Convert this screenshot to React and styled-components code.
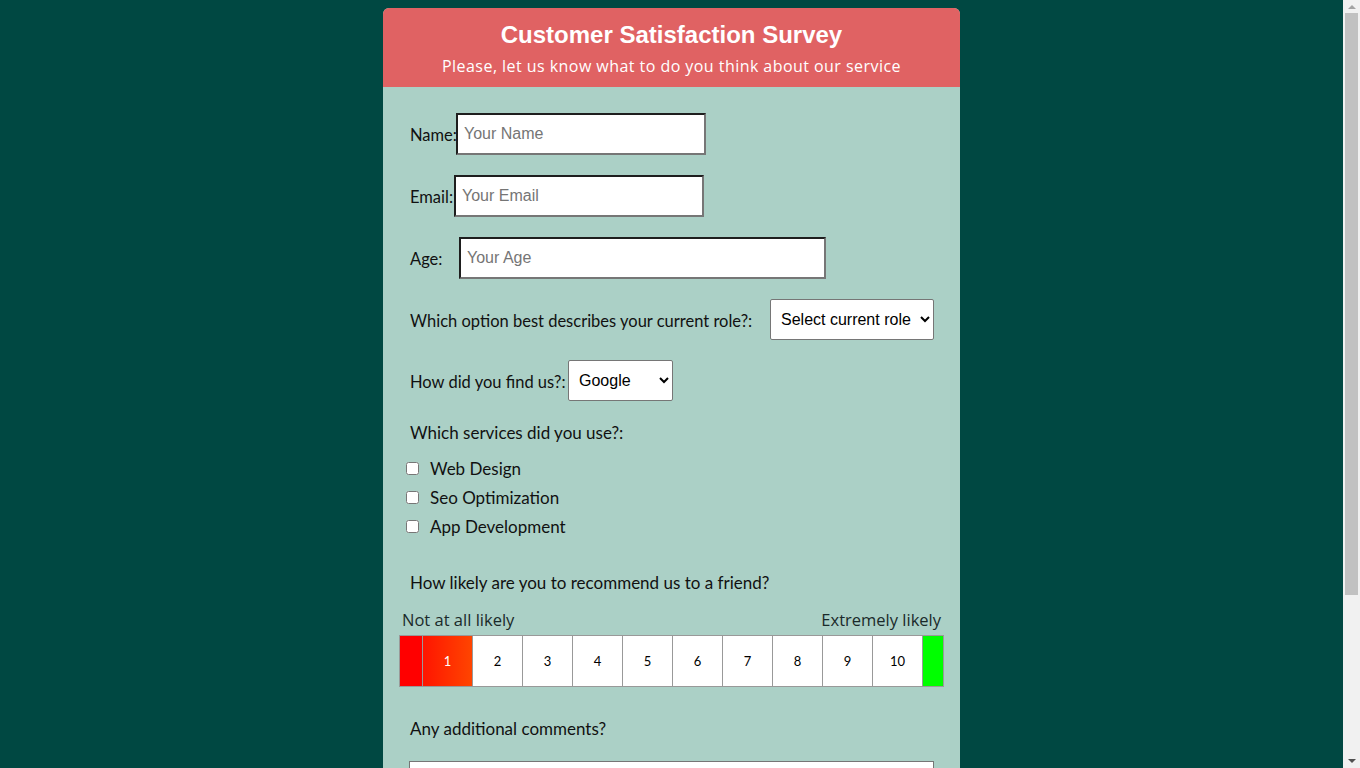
import React from "react";
import styled, { createGlobalStyle } from "styled-components";

const Global = createGlobalStyle`
  html { background: #004842; }
  body { margin: 8px 25px 8px 8px; font-family: "Liberation Sans", Arial, sans-serif; background: #004842; }
  * { box-sizing: border-box; }
`;

const comic = `"Lato", "Noto Sans", sans-serif`;
const poppins = `"Open Sans", "Noto Sans", sans-serif`;

const ScrollBar = styled.div`
  position: fixed;
  top: 0;
  right: 0;
  width: 17px;
  height: 100vh;
  background: #f1f1f1;
  display: flex;
  flex-direction: column;
  align-items: center;
  z-index: 10;
`;

const Arrow = styled.div`
  width: 0;
  height: 0;
  border-left: 4px solid transparent;
  border-right: 4px solid transparent;
  ${(p) =>
    p.$down
      ? `border-top: 4px solid #505050; margin-top: auto; margin-bottom: 5px;`
      : `border-bottom: 4px solid #a3a3a3; margin-top: 5px;`}
`;

const Thumb = styled.div`
  width: 13px;
  height: 582px;
  margin-top: 4px;
  background: #c1c1c1;
`;

const Card = styled.main`
  width: 577px;
  margin: 0 auto;
  background: #abd0c6;
  border-radius: 6px 6px 0 0;
  overflow: hidden;
`;

const Header = styled.header`
  height: 79px;
  background: #e06263;
  color: #fff;
  text-align: center;
  display: flex;
  flex-direction: column;
  align-items: center;
  padding-top: 12px;
`;

const Title = styled.h1`
  margin: 0;
  font-family: "Liberation Sans", Arial, sans-serif;
  font-weight: 700;
  font-size: 24px;
  line-height: 30px;
`;

const Subtitle = styled.p`
  margin: 5px 0 0;
  font-family: ${poppins};
  font-size: 16px;
  line-height: 22px;
  letter-spacing: 0.45px;
`;

const Form = styled.form`
  display: flex;
  flex-direction: column;
  padding: 26px 16px 41px 16px;
`;

const Row = styled.div`
  display: flex;
  align-items: center;
  padding-left: 11px;
  margin-bottom: ${(p) => p.$mb ?? 20}px;
`;

const Label = styled.label`
  font-family: ${comic};
  font-size: 16.5px;
  color: #111;
  width: ${(p) => (p.$w ? `${p.$w}px` : "auto")};
  flex: none;
  white-space: nowrap;
  padding-top: 2px;
`;

const TextInput = styled.input`
  width: ${(p) => p.$w}px;
  height: 42px;
  flex: none;
  background: #fff;
  border-style: solid;
  border-width: 2px;
  border-color: #1e1e1e #767676 #767676 #1e1e1e;
  padding: 0 6px;
  font-family: "Liberation Sans", Arial, sans-serif;
  font-size: 16px;
  color: #000;
  &::placeholder { color: #757575; }
`;

const Select = styled.select`
  width: ${(p) => p.$w}px;
  height: 41px;
  flex: none;
  background: #fff;
  border: 1px solid #767676;
  border-radius: 2px;
  padding: 0 4px 0 6px;
  font-family: "Liberation Sans", Arial, sans-serif;
  font-size: 16px;
  color: #000;
`;

const Question = styled.p`
  margin: ${(p) => p.$m};
  padding-left: 11px;
  font-family: ${comic};
  font-size: 17px;
  line-height: 20px;
  color: #111;
`;

const CheckList = styled.div`
  display: flex;
  flex-direction: column;
  padding-left: 3px;
  margin-bottom: 32px;
`;

const CheckRow = styled.label`
  display: flex;
  align-items: center;
  height: 29px;
  font-family: ${comic};
  font-size: 17px;
  color: #111;
  input {
    width: 13px;
    height: 13px;
    margin: 0 11px 0 4px;
  }
`;

const LikelyRow = styled.div`
  display: flex;
  justify-content: space-between;
  padding: 0 3px;
  height: 20px;
  align-items: center;
  margin-bottom: 6px;
  font-family: ${poppins};
  font-size: 16.5px;
  color: #1a2a2a;
`;

const Scale = styled.div`
  display: flex;
  width: 545px;
  height: 52px;
  border: 1px solid #999;
  margin-bottom: 32px;
`;

const EndCap = styled.div`
  width: ${(p) => p.$w}px;
  flex: none;
  background: ${(p) => p.$c};
  border-right: ${(p) => (p.$sep ? "1px solid #999" : "none")};
`;

const Cell = styled.button`
  width: 50px;
  flex: none;
  border: none;
  border-right: 1px solid #999;
  background: ${(p) => (p.$active ? "linear-gradient(to right, #ff1500, #ff4500)" : "#fff")};
  color: ${(p) => (p.$active ? "#fff" : "#000")};
  font-family: ${comic};
  font-size: 13px;
  padding: 0;
  cursor: pointer;
`;

const TextArea = styled.textarea`
  width: 525px;
  height: 100px;
  margin: 0 0 20px 10px;
  border: 1px solid #767676;
  background: #fff;
  resize: vertical;
`;

const Submit = styled.button`
  align-self: center;
  width: 200px;
  height: 40px;
  border: none;
  border-radius: 4px;
  background: #e06263;
  color: #fff;
  font-family: "Liberation Sans", Arial, sans-serif;
  font-size: 18px;
  font-weight: 700;
`;

export default function App() {
  const nums = [1, 2, 3, 4, 5, 6, 7, 8, 9, 10];
  return (
    <>
      <Global />
      <ScrollBar aria-hidden="true">
        <Arrow />
        <Thumb />
        <Arrow $down />
      </ScrollBar>
      <Card>
        <Header>
          <Title>Customer Satisfaction Survey</Title>
          <Subtitle>Please, let us know what to do you think about our service</Subtitle>
        </Header>
        <Form onSubmit={(e) => e.preventDefault()}>
          <Row>
            <Label $w={46}>Name:</Label>
            <TextInput $w={250} placeholder="Your Name" />
          </Row>
          <Row>
            <Label $w={44}>Email:</Label>
            <TextInput $w={250} placeholder="Your Email" />
          </Row>
          <Row>
            <Label $w={49}>Age:</Label>
            <TextInput $w={367} placeholder="Your Age" />
          </Row>
          <Row>
            <Label $w={360}>Which option best describes your current role?:</Label>
            <Select $w={164} defaultValue="">
              <option value="">Select current role</option>
              <option>Student</option>
              <option>Full Time Job</option>
              <option>Other</option>
            </Select>
          </Row>
          <Row $mb={22}>
            <Label $w={158}>How did you find us?:</Label>
            <Select $w={105} defaultValue="Google">
              <option>Google</option>
              <option>Friend</option>
              <option>Other</option>
            </Select>
          </Row>
          <Question $m="0 0 11px">Which services did you use?:</Question>
          <CheckList>
            <CheckRow><input type="checkbox" />Web Design</CheckRow>
            <CheckRow><input type="checkbox" />Seo Optimization</CheckRow>
            <CheckRow><input type="checkbox" />App Development</CheckRow>
          </CheckList>
          <Question $m="0 0 16px">How likely are you to recommend us to a friend?</Question>
          <LikelyRow>
            <span>Not at all likely</span>
            <span>Extremely likely</span>
          </LikelyRow>
          <Scale>
            <EndCap $w={23} $c="#ff0000" $sep />
            {nums.map((n) => (
              <Cell key={n} type="button" $active={n === 1}>{n}</Cell>
            ))}
            <EndCap $w={20} $c="#00ff00" />
          </Scale>
          <Question $m="0 0 22px">Any additional comments?</Question>
          <TextArea />
          <Submit type="submit">Submit</Submit>
        </Form>
      </Card>
    </>
  );
}
